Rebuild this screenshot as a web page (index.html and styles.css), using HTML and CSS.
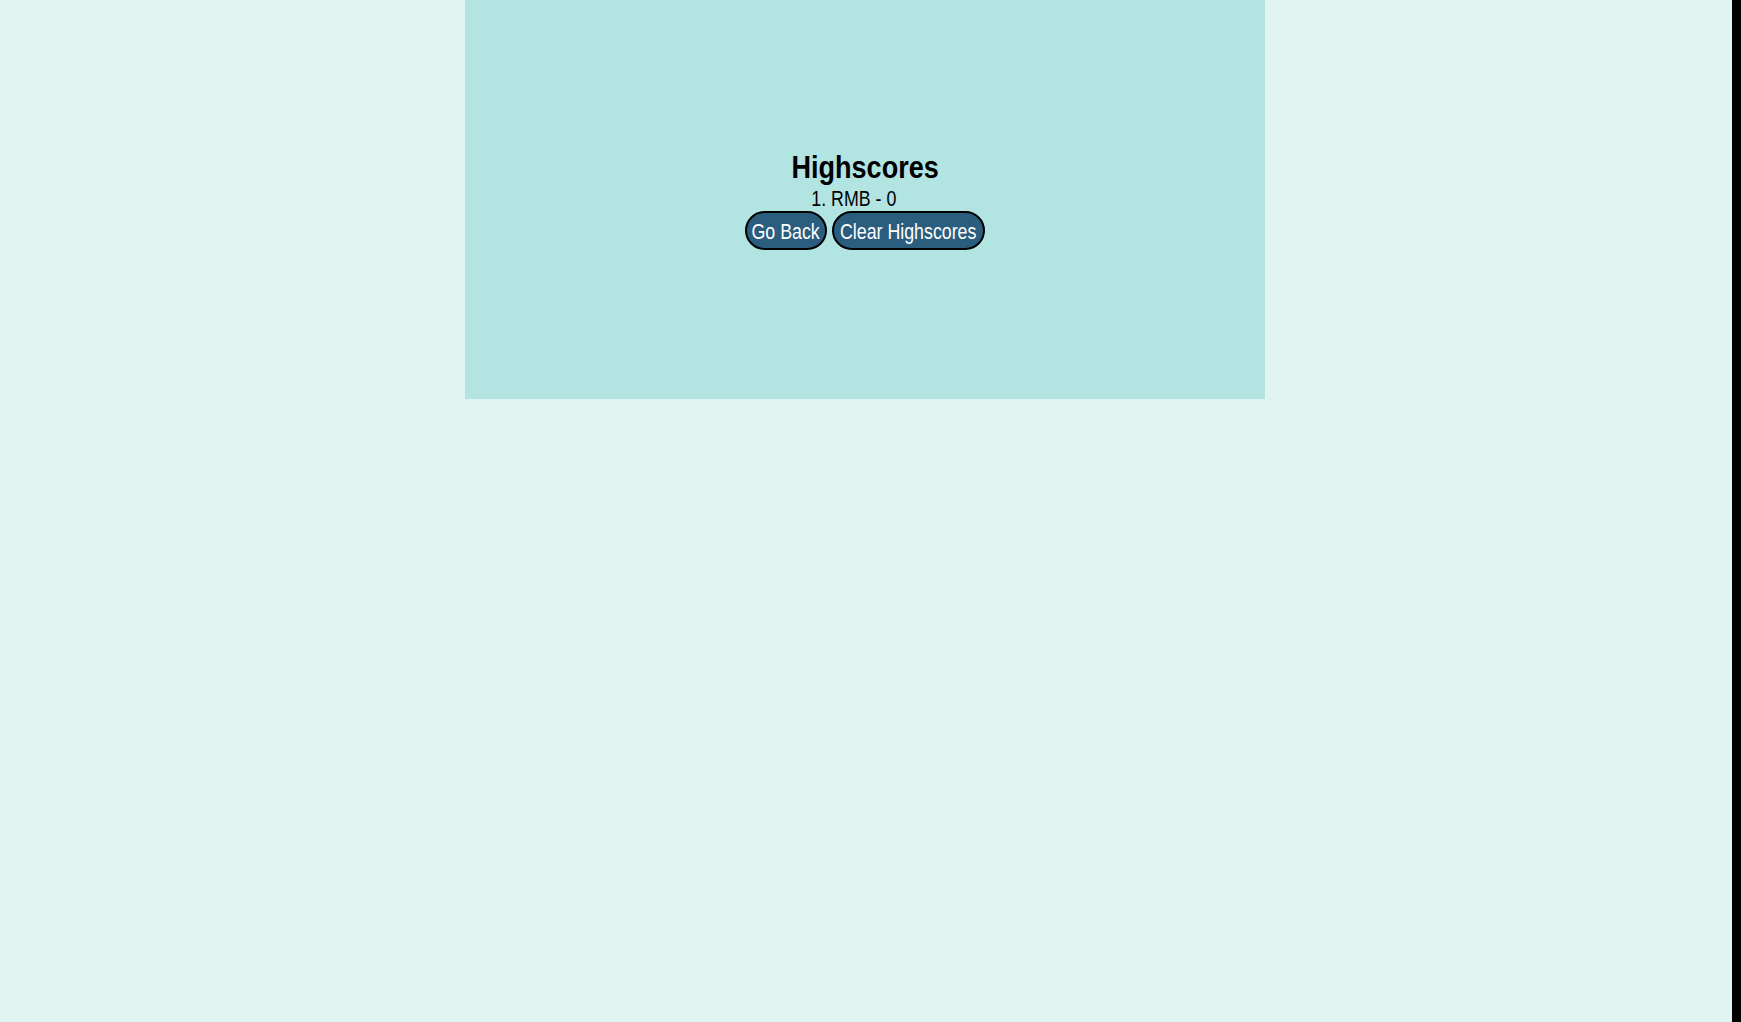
FILE: index.html
```html
<!DOCTYPE html>
<html lang="en">
<head>
<meta charset="utf-8">
<title>Highscores</title>
<link rel="stylesheet" href="styles.css">
</head>
<body>
<div class="page">
  <main class="card">
    <h1 class="title"><span class="narrow">Highscores</span></h1>
    <p class="score"><span class="narrow">1. RMB - 0</span></p>
    <div class="actions">
      <button class="btn btn-back"><span class="narrow">Go Back</span></button>
      <button class="btn btn-clear"><span class="narrow">Clear Highscores</span></button>
    </div>
  </main>
</div>
<div class="edge"></div>
</body>
</html>
```
FILE: styles.css
```css
html, body {
  margin: 0;
  height: 100%;
}
body {
  display: flex;
  font-family: "Liberation Sans", Arial, sans-serif;
  color: #000;
}
.page {
  flex: 1;
  padding-right: 2px;
  background: #e0f4f2;
}
.edge {
  width: 9px;
  background: #000;
}
.card {
  box-sizing: border-box;
  width: 800px;
  height: 399px;
  margin: 0 auto;
  padding-top: 147px;
  background: #b2e4e2;
  display: flex;
  flex-direction: column;
  align-items: center;
  text-align: center;
}
.narrow {
  display: inline-block;
  white-space: nowrap;
  transform: scaleX(0.82);
  transform-origin: center;
}
.title {
  margin: 0;
  font-size: 32px;
  line-height: 40px;
  font-weight: bold;
}
.title .narrow {
  transform: scaleX(0.845);
}
.score {
  margin: 0;
  font-size: 21.7px;
  line-height: 24px;
  padding-right: 22px;
}
.actions {
  display: flex;
  gap: 5px;
}
.btn {
  display: flex;
  justify-content: center;
  box-sizing: border-box;
  height: 39px;
  font-family: inherit;
  font-size: 21.7px;
  line-height: 25px;
  color: #fff;
  background: #2a5d7e;
  border: 2px solid #000;
  border-radius: 20px;
  padding: 6px 0 4px;
  margin: 0;
  overflow: visible;
}
.btn-back {
  width: 82px;
}
.btn-clear {
  width: 153px;
}
```
